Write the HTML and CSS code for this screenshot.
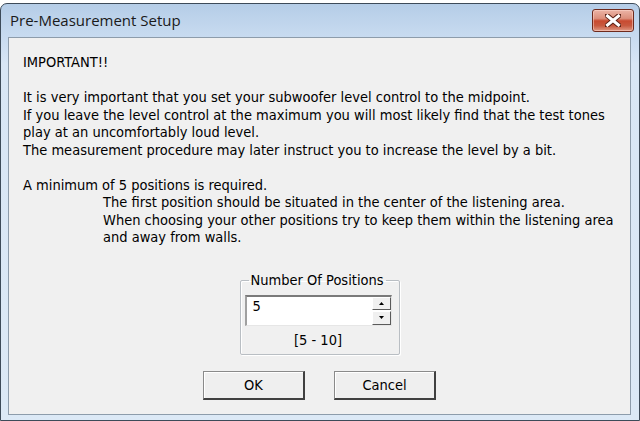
FILE: index.html
```html
<!DOCTYPE html>
<html>
<head>
<meta charset="utf-8">
<title>Pre-Measurement Setup</title>
<link rel="stylesheet" href="styles.css">
</head>
<body>
<div class="window">
  <div class="titlebar">
    <span class="title">Pre-Measurement Setup</span>
    <button class="close" aria-label="Close">
      <svg width="16" height="13" viewBox="0 0 16 13">
        <path d="M2 1.5 L14 11.5 M14 1.5 L2 11.5" stroke="#5a1f14" stroke-width="5" stroke-linecap="square"/>
        <path d="M2.5 2 L13.5 11 M13.5 2 L2.5 11" stroke="#ffffff" stroke-width="3" stroke-linecap="square"/>
      </svg>
    </button>
  </div>
  <div class="client">
    <div class="message">
      <p>IMPORTANT!!</p>
      <p>It is very important that you set your subwoofer level control to the midpoint.<br>If you leave the level control at the maximum you will most likely find that the test tones<br>play at an uncomfortably loud level.<br>The measurement procedure may later instruct you to increase the level by a bit.</p>
      <p class="tight">A minimum of 5 positions is required.</p>
      <p class="indent">The first position should be situated in the center of the listening area.<br>When choosing your other positions try to keep them within the listening area<br>and away from walls.</p>
    </div>
    <fieldset class="group">
      <legend>Number Of Positions</legend>
      <div class="spinwrap">
        <div class="spin">
          <div class="edit">5</div>
          <div class="arrows">
            <span class="arrow"><svg width="5" height="3" viewBox="0 0 5 3"><path d="M2.5 0 L5 3 L0 3 Z" fill="#000"/></svg></span>
            <span class="arrow"><svg width="5" height="3" viewBox="0 0 5 3"><path d="M0 0 L5 0 L2.5 3 Z" fill="#000"/></svg></span>
          </div>
        </div>
        <div class="range">[5 - 10]</div>
      </div>
    </fieldset>
    <div class="buttons">
      <button class="btn">OK</button>
      <button class="btn">Cancel</button>
    </div>
  </div>
</div>
</body>
</html>
```
FILE: styles.css
```css
html, body {
  margin: 0;
  padding: 0;
  width: 640px;
  height: 421px;
  overflow: hidden;
  background: #ffffff;
}

.window {
  box-sizing: border-box;
  margin-top: 3px;
  height: 418px;
  border: 1px solid #3d4b59;
  border-radius: 7px 7px 0 0;
  background: linear-gradient(#b5cde7 0px, #c8dbf0 33px, #d8e6f5 60px, #dce9f6 100%);
  display: flex;
  flex-direction: column;
}

.titlebar {
  height: 33px;
  display: flex;
  justify-content: space-between;
  align-items: flex-start;
  flex: none;
}

.title {
  font-family: "Open Sans", "Noto Sans", sans-serif;
  font-size: 15px;
  line-height: 20px;
  color: #1a1a1a;
  padding: 6px 0 0 9px;
}

.close {
  box-sizing: border-box;
  width: 42px;
  height: 23px;
  margin: 5px 5px 0 0;
  padding: 0;
  border: 1px solid #6e2a1d;
  border-radius: 3px;
  background: linear-gradient(#ecb4a6 0%, #dc8f7c 40%, #c84a30 52%, #c85a40 75%, #e09a86 100%);
  box-shadow: inset 0 0 0 1px rgba(255,220,210,0.5);
  display: flex;
  align-items: center;
  justify-content: center;
}

.client {
  flex: 1;
  margin: 0 8px 5px 7px;
  border: 1px solid #8d9cab;
  background: #f0f0f0;
  display: flex;
  flex-direction: column;
  font-family: "DejaVu Sans", "Liberation Sans", sans-serif;
  font-stretch: condensed;
  font-size: 14.5px;
  color: #000;
}

.message {
  padding: 16px 0 0 14px;
  line-height: 17.5px;
}

.message p {
  margin: 0 0 17.5px 0;
}

.message p.tight {
  margin-bottom: 0;
}

.message p.indent {
  margin: 0 0 0 80px;
}

.group {
  align-self: center;
  box-sizing: border-box;
  width: 160px;
  margin: 25px 0 0 0;
  padding: 6px 4px 5px 4px;
  border: 1px solid #b9bec3;
  border-radius: 2px;
  box-shadow: inset 1px 1px 0 #ffffff, 1px 1px 0 #ffffff;
}

.group legend {
  margin-left: 4px;
  padding: 0 2px;
  line-height: 17px;
}

.spinwrap {
  width: 147px;
}

.spin {
  box-sizing: border-box;
  height: 31px;
  display: flex;
  background: #ffffff;
  border-style: solid;
  border-width: 2px 1px 1px 2px;
  border-color: #7a7a7a #e6e6e6 #e6e6e6 #a0a0a0;
}

.edit {
  flex: 1;
  padding: 1px 0 0 6px;
  line-height: 17px;
}

.arrows {
  width: 19px;
  display: flex;
  flex-direction: column;
  gap: 1px;
}

.arrow {
  flex: 1;
  box-sizing: border-box;
  background: #f0f0f0;
  border-style: solid;
  border-width: 1px;
  border-color: #ffffff #5a5a5a #5a5a5a #ffffff;
  display: flex;
  align-items: center;
  justify-content: center;
}

.range {
  text-align: center;
  line-height: 17px;
  margin-top: 6px;
}

.buttons {
  display: flex;
  justify-content: center;
  gap: 29px;
  margin-top: 16px;
}

.btn {
  box-sizing: border-box;
  width: 102px;
  height: 29px;
  padding: 0;
  font-family: "DejaVu Sans", "Liberation Sans", sans-serif;
  font-stretch: condensed;
  font-size: 14.5px;
  color: #000;
  background: #efefef;
  border-style: solid;
  border-width: 1px 2px 2px 1px;
  border-color: #8a8a8a #404040 #404040 #8a8a8a;
  box-shadow: inset 1px 1px 0 #ffffff;
}
```
